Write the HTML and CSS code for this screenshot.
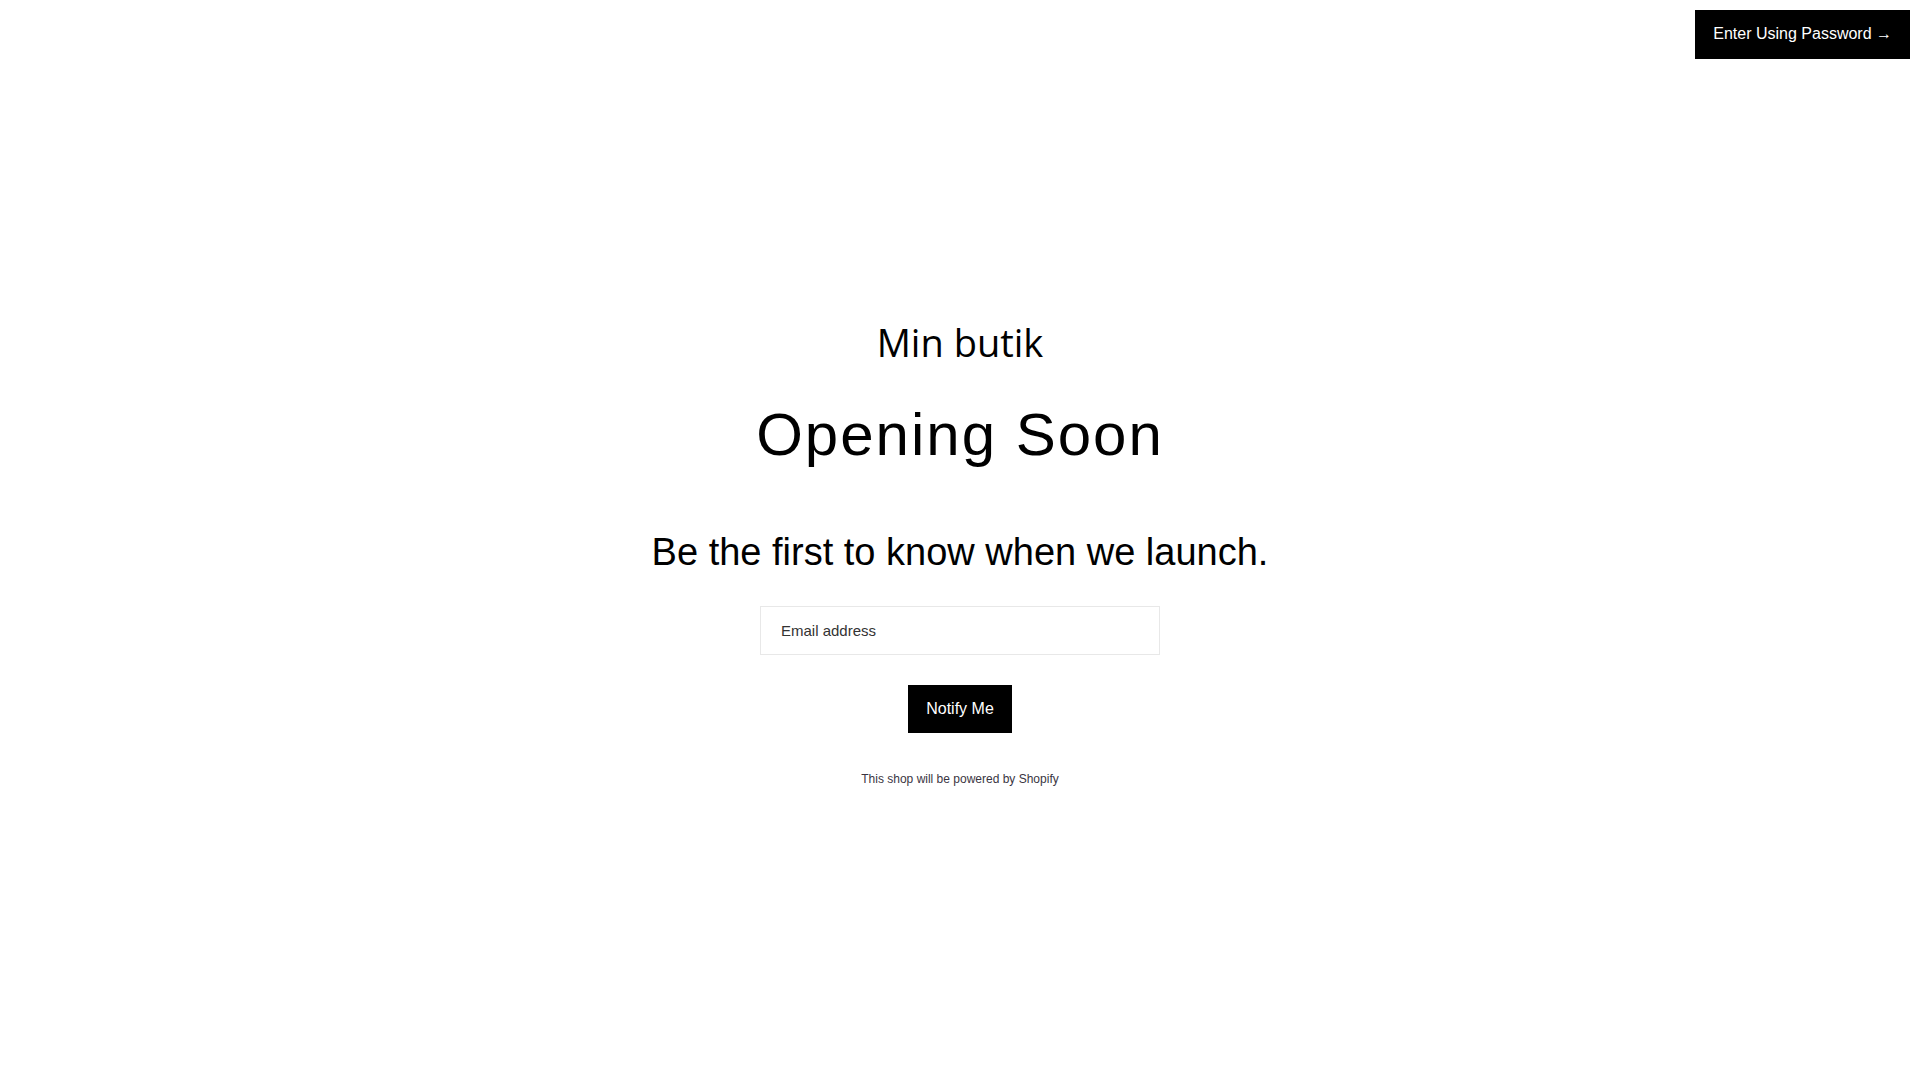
FILE: index.html
```html
<!DOCTYPE html>
<html lang="sv">
<head>
<meta charset="utf-8">
<title>Min butik</title>
<link rel="stylesheet" href="styles.css">
</head>
<body>
<header class="topbar">
  <a class="enter-btn" href="#">Enter Using Password →</a>
</header>
<main class="content">
  <h1 class="shop-name">Min butik</h1>
  <h2 class="headline">Opening Soon</h2>
  <p class="tagline">Be the first to know when we launch.</p>
  <form class="signup" onsubmit="return false;">
    <input class="email" type="email" placeholder="Email address">
    <button class="notify" type="submit">Notify Me</button>
  </form>
  <p class="powered">This shop will be powered by <a href="#">Shopify</a></p>
</main>
</body>
</html>
```

FILE: styles.css
```css
html, body {
  margin: 0;
  padding: 0;
  background: #ffffff;
}

body {
  font-family: "Liberation Sans", Arial, sans-serif;
  color: #000000;
}

.topbar {
  display: flex;
  justify-content: flex-end;
  padding: 10px 10px 0 10px;
}

.enter-btn {
  display: block;
  background: #000000;
  color: #ffffff;
  text-decoration: none;
  font-size: 16px;
  line-height: 19px;
  padding: 14px 18px 16px 18px;
}

.content {
  display: flex;
  flex-direction: column;
  align-items: center;
  padding-top: 257px;
  text-align: center;
}

.shop-name {
  margin: 0;
  font-family: "Open Sans", "Noto Sans", sans-serif;
  font-weight: 400;
  font-size: 38px;
  line-height: 52px;
}

.headline {
  margin: 31px 0 0 0;
  font-weight: 400;
  font-size: 60px;
  line-height: 72px;
  letter-spacing: 2px;
}

.tagline {
  margin: 58px 0 0 0;
  font-size: 38px;
  line-height: 46px;
}

.signup {
  display: flex;
  flex-direction: column;
  align-items: center;
  margin-top: 31px;
}

.email {
  box-sizing: border-box;
  width: 400px;
  height: 49px;
  margin: 0;
  padding: 0 20px;
  border: 1px solid #e8e8e8;
  border-radius: 0;
  font-family: "Liberation Sans", Arial, sans-serif;
  font-size: 15px;
  color: #333333;
  background: #ffffff;
  outline: none;
}

.email::placeholder {
  color: #333333;
  opacity: 1;
}

.notify {
  margin-top: 30px;
  height: 48px;
  padding: 0 18px;
  border: none;
  border-radius: 0;
  background: #000000;
  color: #ffffff;
  font-family: "Liberation Sans", Arial, sans-serif;
  font-size: 16px;
  cursor: pointer;
}

.powered {
  margin: 38px 0 0 0;
  font-size: 12px;
  line-height: 16px;
  color: #3a3542;
}

.powered a {
  color: #3a3542;
  text-decoration: none;
}
```
